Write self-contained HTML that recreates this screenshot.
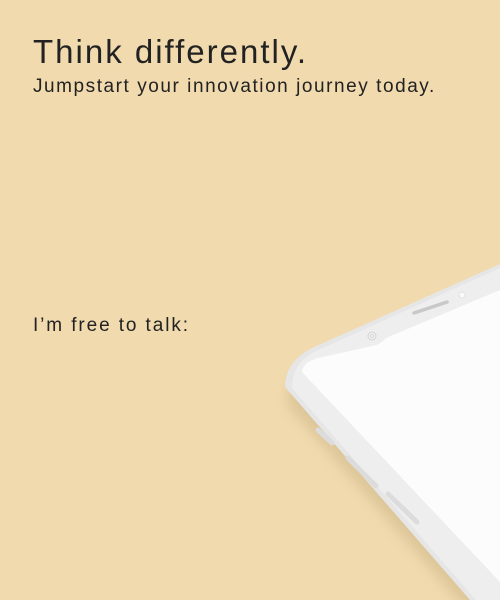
<!DOCTYPE html>
<html><head><style>
html,body{margin:0;padding:0;width:500px;height:600px;overflow:hidden;background:#f0daae;font-family:"Liberation Sans",sans-serif;color:#222}
.t{position:absolute;left:33px;white-space:nowrap;font-weight:300}
</style></head><body>
<div class="t" style="top:33px;font-size:33px;letter-spacing:2px">Think differently.</div>
<div class="t" style="top:76px;font-size:19px;letter-spacing:1.55px">Jumpstart your innovation journey today.</div>
<div class="t" style="top:315px;font-size:19px;letter-spacing:1.9px">I’m free to talk:</div>
<svg width="500" height="600" style="position:absolute;left:0;top:0">
<defs>
<filter id="s" x="-20%" y="-20%" width="140%" height="140%"><feGaussianBlur stdDeviation="6"/></filter>
</defs>
<path d="M500 275 L312 360 Q290 372 292 395 L480 610 L500 610 Z" fill="#b8a070" opacity="0.35" filter="url(#s)" transform="translate(-4,10)"/>
<path d="M500 264 L312 348 Q285 362 285 387 L470 600 L500 600 Z" fill="#e6e6e6"/>
<path d="M500 268 L314 352 Q292 364 292 388 L476 600 L500 600 Z" fill="#eeeeee"/>
<path d="M500 290 L386 338 Q380 345 372 346 L318 358 Q303 362 302 372 L500 582 Z" fill="#fcfcfc"/>
<path d="M414 313 L447 302" stroke="#c8c8c8" stroke-width="3.5" stroke-linecap="round"/>
<circle cx="462" cy="295" r="3" fill="#fafafa" stroke="#ddd" stroke-width="0.8"/>
<circle cx="372" cy="336" r="4" fill="none" stroke="#d4d4d4" stroke-width="1"/>
<circle cx="372" cy="336" r="1.5" fill="none" stroke="#d4d4d4" stroke-width="0.8"/>
<path d="M318 430 L332 443" stroke="#dcdcdc" stroke-width="5" stroke-linecap="round"/>
<path d="M348 458 L376 486" stroke="#dcdcdc" stroke-width="5" stroke-linecap="round"/>
<path d="M388 494 L417 522" stroke="#dcdcdc" stroke-width="5" stroke-linecap="round"/>
</svg>
</body></html>
